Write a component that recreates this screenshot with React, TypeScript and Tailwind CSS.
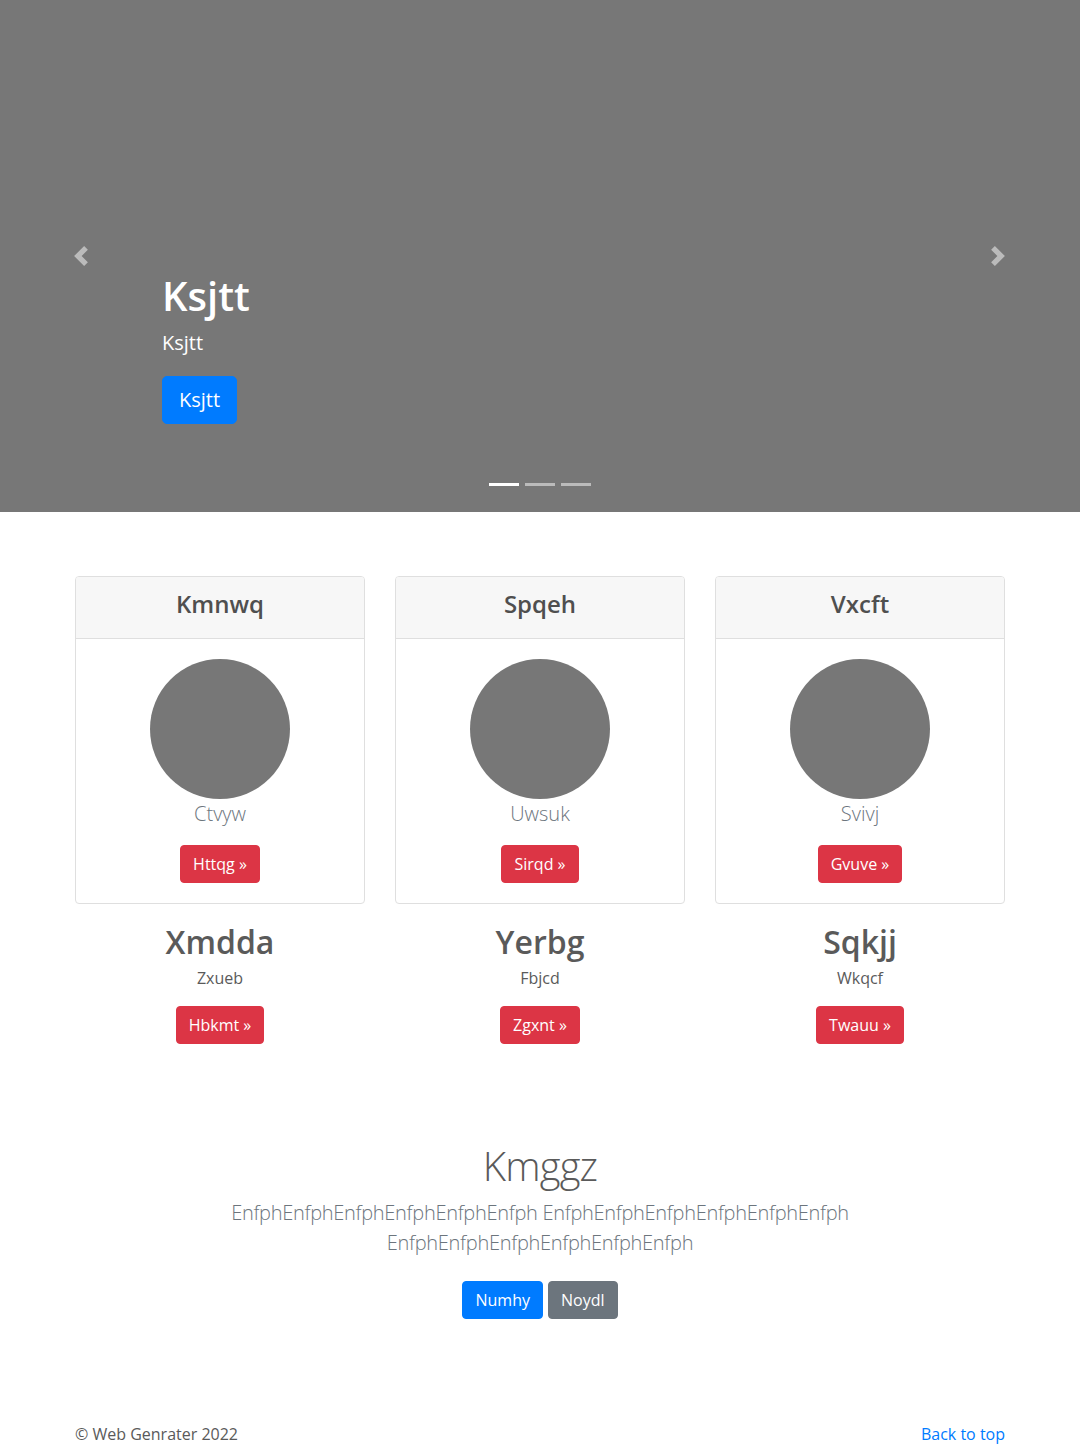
import React from 'react';

const font = { fontFamily: '"Open Sans", "Noto Sans", Arial, sans-serif' };

interface Member {
  title: string;
  caption: string;
  action: string;
  heading: string;
  text: string;
  link: string;
}

const members: Member[] = [
  { title: 'Kmnwq', caption: 'Ctvyw', action: 'Httqg', heading: 'Xmdda', text: 'Zxueb', link: 'Hbkmt' },
  { title: 'Spqeh', caption: 'Uwsuk', action: 'Sirqd', heading: 'Yerbg', text: 'Fbjcd', link: 'Zgxnt' },
  { title: 'Vxcft', caption: 'Svivj', action: 'Gvuve', heading: 'Sqkjj', text: 'Wkqcf', link: 'Twauu' },
];

const Chevron: React.FC<{ flip?: boolean }> = ({ flip }) => (
  <svg viewBox="0 0 8 8" className="w-5 h-5" fill="#fff">
    <path d={flip ? 'M2.75 0l-1.5 1.5 2.5 2.5-2.5 2.5 1.5 1.5 4-4-4-4z' : 'M5.25 0l-4 4 4 4 1.5-1.5-2.5-2.5 2.5-2.5-1.5-1.5z'} />
  </svg>
);

const DangerButton: React.FC<{ label: string }> = ({ label }) => (
  <button className="px-3 py-1.5 text-base leading-6 text-white bg-[#dc3545] border border-[#dc3545] rounded-[4px]">
    {label} &raquo;
  </button>
);

export default function App() {
  return (
    <div className="bg-white text-[#5a5a5a] min-h-[1446px] flex flex-col" style={font}>
      {/* carousel */}
      <div className="relative h-[512px] bg-[#777] flex flex-col justify-end pl-[162px] pb-[88px]">
        <h1 className="text-[40px] leading-[48px] font-semibold text-white mb-2">Ksjtt</h1>
        <p className="text-[20px] leading-[30px] text-white mb-[18px]">Ksjtt</p>
        <div>
          <button className="px-4 py-2 text-[20px] leading-[30px] text-white bg-[#007bff] border border-[#007bff] rounded-[5px]">
            Ksjtt
          </button>
        </div>

        <div className="absolute left-[71px] top-[246px] opacity-50">
          <Chevron />
        </div>
        <div className="absolute right-[72px] top-[246px] opacity-50">
          <Chevron flip />
        </div>

        <div className="absolute left-0 right-0 bottom-[26px] flex justify-center gap-1.5">
          <span className="w-[30px] h-[3px] bg-white" />
          <span className="w-[30px] h-[3px] bg-white opacity-50" />
          <span className="w-[30px] h-[3px] bg-white opacity-50" />
        </div>
      </div>

      {/* members */}
      <div className="w-[930px] mx-auto mt-16 grid grid-cols-3 gap-[30px]">
        {members.map(m => (
          <div key={m.title} className="flex flex-col items-center text-center">
            <div className="w-full border border-[#dfdfdf] rounded-[4px] overflow-hidden">
              <div className="h-[62px] pb-2 bg-[#f7f7f7] border-b border-[#dfdfdf] flex items-center justify-center">
                <h4 className="text-[24px] leading-[32px] font-semibold text-[#4f4f4f]">{m.title}</h4>
              </div>
              <div className="p-5 flex flex-col items-center">
                <div className="w-[140px] h-[140px] rounded-full bg-[#777]" />
                <p className="text-[20px] leading-[30px] font-light text-[#6c757d] mb-4">{m.caption}</p>
                <DangerButton label={m.action} />
              </div>
            </div>
            <h2 className="text-[32px] leading-[38px] font-semibold mt-[19px] mb-[5px]">{m.heading}</h2>
            <p className="text-base leading-6 mb-4">{m.text}</p>
            <DangerButton label={m.link} />
          </div>
        ))}
      </div>

      {/* featurette */}
      <div className="mt-[98px] flex flex-col items-center text-center">
        <h2 className="text-[40px] leading-[48px] font-light tracking-[-0.8px] mb-2">Kmggz</h2>
        <p className="w-[660px] text-[20px] leading-[30px] font-light tracking-[-0.3px] text-[#6c757d]">
          EnfphEnfphEnfphEnfphEnfphEnfph EnfphEnfphEnfphEnfphEnfphEnfph EnfphEnfphEnfphEnfphEnfphEnfph
        </p>
        <div className="mt-[23px] flex gap-[5px]">
          <button className="px-3 py-1.5 text-base leading-6 text-white bg-[#007bff] border border-[#007bff] rounded-[4px]">Numhy</button>
          <button className="px-3 py-1.5 text-base leading-6 text-white bg-[#6c757d] border border-[#6c757d] rounded-[4px]">Noydl</button>
        </div>
      </div>

      {/* footer */}
      <footer className="mt-auto w-[930px] mx-auto flex justify-between text-base leading-6">
        <p>&copy; Web Genrater 2022</p>
        <a href="#" className="text-[#007bff]">Back to top</a>
      </footer>
    </div>
  );
}
